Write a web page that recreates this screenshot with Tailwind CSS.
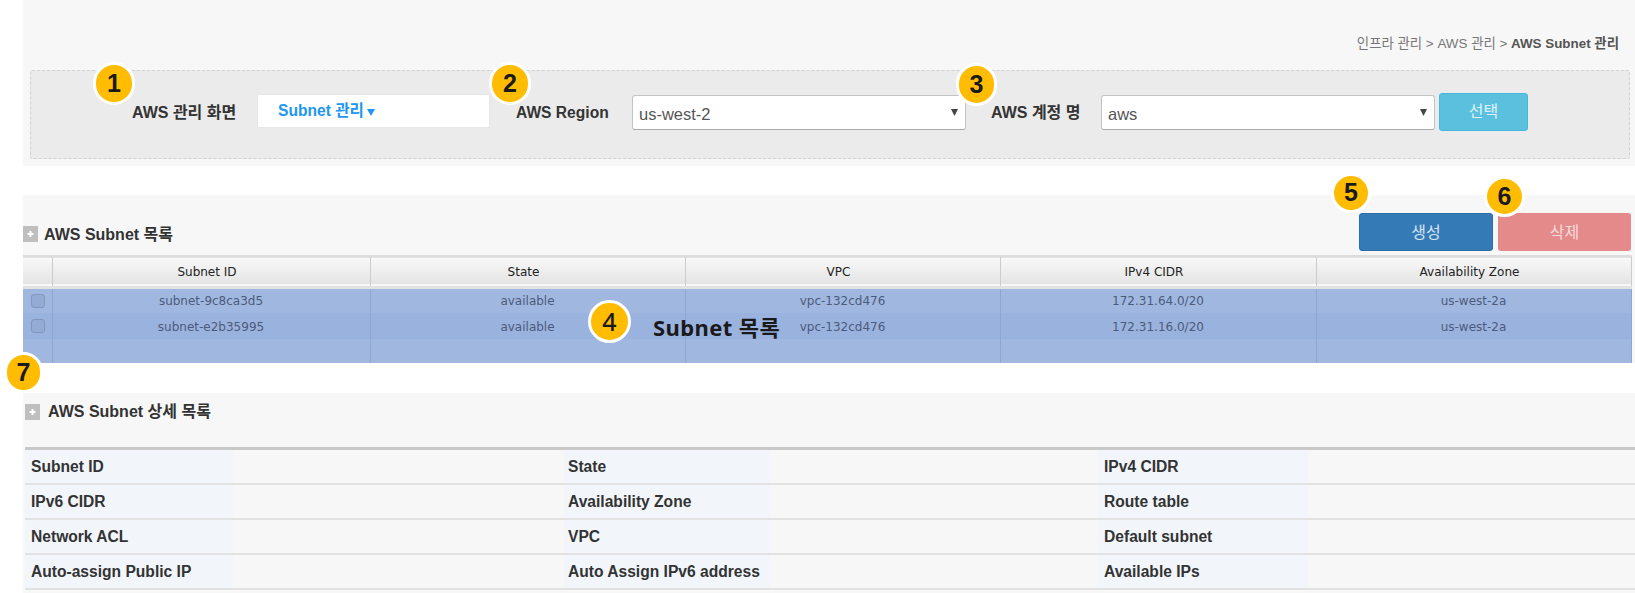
<!DOCTYPE html>
<html lang="ko">

<head>
  <meta charset="UTF-8" />
  <title>AWS Subnet 관리</title>
  <script src="https://cdn.jsdelivr.net/npm/@tailwindcss/browser@4"></script>
</head>

<body class="relative bg-white h-[593px] overflow-hidden pl-[23px] font-['Liberation_Sans','Noto_Sans_CJK_KR',sans-serif] text-[15.6px] text-[#333]">

  <!-- Filter panel -->
  <section class="bg-[#f7f7f7] h-[166px] pt-[37px]">
    <div class="h-[33px] pr-[16px] text-right text-[13.4px] leading-[14px] text-[#777]">
      인프라 관리 &gt; AWS 관리 &gt; <b class="text-[#555]">AWS Subnet 관리</b>
    </div>
    <div class="ml-[7px] mr-[5px] h-[89px] flex items-start bg-[#ebebeb] border border-dashed border-[#d2d2d2] rounded-[2px] pt-[22px]">
      <span class="ml-[101px] w-[125px] mt-[12px] font-bold text-[16px] leading-[16px]">AWS 관리 화면</span>
      <div class="w-[233px] h-[34px] mt-[1px] bg-white border border-[#e6e6e6] pl-[20px] flex items-center gap-[3px] font-bold text-[#2196f3]">
        Subnet 관리
        <svg width="8" height="7" viewBox="0 0 8 7" class="mt-[3px]"><polygon points="0,0 8,0 4,7" fill="#2196f3" /></svg>
      </div>
      <span class="ml-[26px] w-[116px] mt-[12px] font-bold leading-[16px]">AWS Region</span>
      <div class="relative w-[334px] h-[35px] mt-[2px]">
        <select class="appearance-none w-full h-full bg-white border border-[#c4c4c4] border-b-[#aaa] rounded-[3px] pl-[6px] text-[16.5px] text-[#555] pt-[4px]">
          <option>us-west-2</option>
        </select>
        <svg width="7" height="7" viewBox="0 0 7 7" class="absolute right-[8px] top-[14px]"><polygon points="0,0 7,0 3.5,7" fill="#444" /></svg>
      </div>
      <span class="ml-[25px] w-[110px] mt-[12px] font-bold text-[16px] leading-[16px]">AWS 계정 명</span>
      <div class="relative w-[334px] h-[35px] mt-[2px]">
        <select class="appearance-none w-full h-full bg-white border border-[#c4c4c4] border-b-[#aaa] rounded-[3px] pl-[6px] text-[16.5px] text-[#555] pt-[4px]">
          <option>aws</option>
        </select>
        <svg width="7" height="7" viewBox="0 0 7 7" class="absolute right-[8px] top-[14px]"><polygon points="0,0 7,0 3.5,7" fill="#444" /></svg>
      </div>
      <button class="ml-[4px] w-[89px] h-[38px] bg-[#5bc0de] border border-[#46b8da] rounded-[3px] text-white/80 text-[16px]">선택</button>
    </div>
  </section>

  <!-- Subnet list -->
  <section class="mt-[29px] bg-[#f7f7f7] h-[168px] pt-[18px]">
    <div class="h-[42px] flex items-start">
      <svg width="15" height="16" viewBox="0 0 15 16" class="mt-[13px] shrink-0">
        <rect width="15" height="16" fill="#bfbfbf" />
        <path d="M7.5 5v6M4.5 8h6" stroke="#fff" stroke-width="2" />
      </svg>
      <h2 class="ml-[6px] mt-[13px] font-bold text-[16px] leading-[17px]">AWS Subnet 목록</h2>
      <button class="ml-auto w-[134px] h-[38px] pt-[1px] bg-[#337ab7] border border-[#2e6da4] rounded-[3px] text-white/80 text-[16px]">생성</button>
      <button class="ml-[5px] mr-[4px] w-[133px] h-[38px] pt-[1px] bg-[#e48a8a] rounded-[3px] text-white/70 text-[16px]">삭제</button>
    </div>
    <table class="table-fixed w-[1608px] border-collapse font-['DejaVu_Sans',sans-serif] text-[12px]">
      <colgroup>
        <col class="w-[29px]" />
        <col class="w-[318px]" />
        <col class="w-[315px]" />
        <col class="w-[315px]" />
        <col class="w-[316px]" />
        <col class="w-[315px]" />
      </colgroup>
      <thead>
        <tr class="h-[31px] bg-gradient-to-b from-[#f8f8f8] to-[#e4e4e4] border-t-2 border-t-[#dcdcdc] border-b-3 border-b-[#e2e2e2] text-[#222]">
          <th class="font-normal"></th>
          <th class="font-normal pr-2 pt-[1px] border-l border-[#ccc]">Subnet ID</th>
          <th class="font-normal pr-2 pt-[1px] border-l border-[#ccc]">State</th>
          <th class="font-normal pr-2 pt-[1px] border-l border-[#ccc]">VPC</th>
          <th class="font-normal pr-2 pt-[1px] border-l border-[#ccc]">IPv4 CIDR</th>
          <th class="font-normal pr-2 pt-[1px] border-x border-[#ccc]">Availability Zone</th>
        </tr>
      </thead>
      <tbody class="text-center text-[#4d5b7b]">
        <tr class="h-[26px] bg-[#a0b8e0]">
          <td class="pl-[8px]"><div class="w-[14px] h-[14px] rounded-[3px] border border-[#8396bd] bg-[#94abd6]"></div></td>
          <td class="border-l border-[#8fa6d0]">subnet-9c8ca3d5</td>
          <td class="border-l border-[#8fa6d0]">available</td>
          <td class="border-l border-[#8fa6d0]">vpc-132cd476</td>
          <td class="border-l border-[#8fa6d0]">172.31.64.0/20</td>
          <td class="border-x border-[#8fa6d0]">us-west-2a</td>
        </tr>
        <tr class="h-[26px] bg-[#9ab2de]">
          <td class="pl-[8px]"><div class="w-[14px] h-[14px] rounded-[3px] border border-[#8396bd] bg-[#94abd6]"></div></td>
          <td class="border-l border-[#8fa6d0] pt-[1px]">subnet-e2b35995</td>
          <td class="border-l border-[#8fa6d0] pt-[1px]">available</td>
          <td class="border-l border-[#8fa6d0] pt-[1px]">vpc-132cd476</td>
          <td class="border-l border-[#8fa6d0] pt-[1px]">172.31.16.0/20</td>
          <td class="border-x border-[#8fa6d0] pt-[1px]">us-west-2a</td>
        </tr>
        <tr class="h-[24px] bg-[#a0b8e0]">
          <td></td>
          <td class="border-l border-[#8fa6d0]"></td>
          <td class="border-l border-[#8fa6d0]"></td>
          <td class="border-l border-[#8fa6d0]"></td>
          <td class="border-l border-[#8fa6d0]"></td>
          <td class="border-x border-[#8fa6d0]"></td>
        </tr>
      </tbody>
    </table>
  </section>

  <!-- Subnet detail -->
  <section class="mt-[30px] bg-[#f7f7f7] h-[200px] pl-[2px] pt-[11px]">
    <div class="h-[43px] flex items-start">
      <svg width="15" height="16" viewBox="0 0 15 16" class="shrink-0">
        <rect width="15" height="16" fill="#bfbfbf" />
        <path d="M7.5 5v6M4.5 8h6" stroke="#fff" stroke-width="2" />
      </svg>
      <h2 class="ml-[8px] font-bold text-[16px] leading-[15px]">AWS Subnet 상세 목록</h2>
    </div>
    <div class="grid grid-cols-[208px_331px_206px_327px_211px_1fr] auto-rows-[35px] border-t-3 border-[#c8c8c8] font-bold text-[#333]">
      <div class="bg-[#f2f6fb] pl-[6px] flex items-center border-b-2 border-[#e2e2e2]">Subnet ID</div>
      <div class="border-b-2 border-[#e2e2e2]"></div>
      <div class="bg-[#f2f6fb] pl-[4px] flex items-center border-b-2 border-[#e2e2e2]">State</div>
      <div class="border-b-2 border-[#e2e2e2]"></div>
      <div class="bg-[#f2f6fb] pl-[7px] flex items-center border-b-2 border-[#e2e2e2]">IPv4 CIDR</div>
      <div class="border-b-2 border-[#e2e2e2]"></div>

      <div class="bg-[#f2f6fb] pl-[6px] flex items-center border-b-2 border-[#e2e2e2]">IPv6 CIDR</div>
      <div class="border-b-2 border-[#e2e2e2]"></div>
      <div class="bg-[#f2f6fb] pl-[4px] flex items-center border-b-2 border-[#e2e2e2]">Availability Zone</div>
      <div class="border-b-2 border-[#e2e2e2]"></div>
      <div class="bg-[#f2f6fb] pl-[7px] flex items-center border-b-2 border-[#e2e2e2]">Route table</div>
      <div class="border-b-2 border-[#e2e2e2]"></div>

      <div class="bg-[#f2f6fb] pl-[6px] flex items-center border-b-2 border-[#e2e2e2]">Network ACL</div>
      <div class="border-b-2 border-[#e2e2e2]"></div>
      <div class="bg-[#f2f6fb] pl-[4px] flex items-center border-b-2 border-[#e2e2e2]">VPC</div>
      <div class="border-b-2 border-[#e2e2e2]"></div>
      <div class="bg-[#f2f6fb] pl-[7px] flex items-center border-b-2 border-[#e2e2e2]">Default subnet</div>
      <div class="border-b-2 border-[#e2e2e2]"></div>

      <div class="bg-[#f2f6fb] pl-[6px] flex items-center border-b-2 border-[#e2e2e2]">Auto-assign Public IP</div>
      <div class="border-b-2 border-[#e2e2e2]"></div>
      <div class="bg-[#f2f6fb] pl-[4px] flex items-center border-b-2 border-[#e2e2e2]">Auto Assign IPv6 address</div>
      <div class="border-b-2 border-[#e2e2e2]"></div>
      <div class="bg-[#f2f6fb] pl-[7px] flex items-center border-b-2 border-[#e2e2e2]">Available IPs</div>
      <div class="border-b-2 border-[#e2e2e2]"></div>
    </div>
  </section>

  <!-- Annotation badges over the page -->
  <span class="absolute left-[93px] top-[62px] w-[42px] h-[43px] rounded-full border-[3px] border-white bg-[#ffbc00] flex items-center justify-center font-bold text-[25px] text-[#1a1a1a]">1</span>
  <span class="absolute left-[489px] top-[62px] w-[42px] h-[43px] rounded-full border-[3px] border-white bg-[#ffbc00] flex items-center justify-center font-bold text-[25px] text-[#1a1a1a]">2</span>
  <span class="absolute left-[956px] top-[63px] w-[41px] h-[43px] rounded-full border-[3px] border-white bg-[#ffbc00] flex items-center justify-center font-bold text-[25px] text-[#1a1a1a]">3</span>
  <span class="absolute left-[588px] top-[300px] w-[43px] h-[43px] rounded-full border-[3px] border-white bg-[#ffbc00] flex items-center justify-center font-['Noto_Sans'] font-medium text-[25px] text-[#1a1a1a]">4</span>
  <span class="absolute left-[1331px] top-[173px] w-[40px] h-[40px] rounded-full border-[3px] border-white bg-[#ffbc00] flex items-center justify-center font-bold text-[25px] text-[#1a1a1a]">5</span>
  <span class="absolute left-[1484px] top-[176px] w-[41px] h-[41px] rounded-full border-[3px] border-white bg-[#ffbc00] flex items-center justify-center font-bold text-[25px] text-[#1a1a1a]">6</span>
  <span class="absolute left-[4px] top-[352px] w-[39px] h-[41px] rounded-full border-[3px] border-white bg-[#ffbc00] flex items-center justify-center font-bold text-[25px] text-[#1a1a1a]">7</span>
  <span class="absolute left-[653px] top-[313px] font-['Noto_Sans','Noto_Sans_CJK_KR',sans-serif] font-bold text-[22px] tracking-[0.4px] leading-[28px] text-[#1a1a1a]">Subnet 목록</span>

</body>

</html>
